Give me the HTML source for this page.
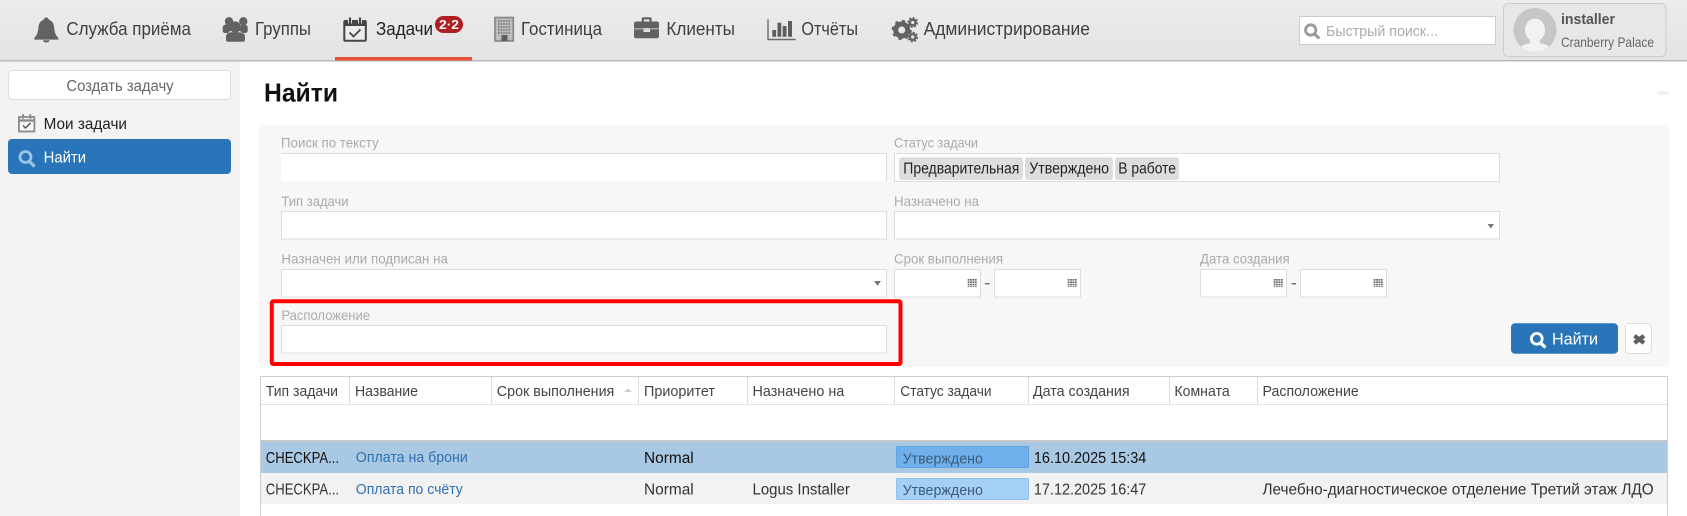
<!DOCTYPE html>
<html lang="ru"><head><meta charset="utf-8"><title>Найти</title>
<style>
html,body{margin:0;padding:0;background:#fff;width:1687px;height:516px;overflow:hidden}
svg{display:block}
text{font-family:"Liberation Sans",sans-serif;white-space:pre}
.n{font-size:18px;fill:#3f3f3f}
.l{font-size:14px;fill:#aaa}
.h{font-size:15px;fill:#444}
.c{font-size:15.5px;fill:#222}
.f{fill:#fff;stroke:#ddd;stroke-width:1}
</style></head><body>
<svg width="1687" height="516" viewBox="0 0 1687 516" xmlns="http://www.w3.org/2000/svg">
<defs>
<linearGradient id="hd" x1="0" y1="0" x2="0" y2="1"><stop offset="0" stop-color="#ececec"/><stop offset="1" stop-color="#e3e3e3"/></linearGradient>
<g id="gr" fill="none" stroke="#666" stroke-dasharray="1.6 .8"><path stroke-width="1.8" d="M0 0v8M2.4 0v8M4.8 0v8M7.2 0v8"/></g>
</defs>

<!-- header -->
<rect x="0" y="0" width="1687" height="60" fill="url(#hd)"/>
<rect x="0" y="60" width="1687" height="1.5" fill="#b9b9b9"/>
<rect x="335" y="57" width="137" height="3.5" fill="#e8503a"/>

<!-- bell -->
<g fill="#626262"><path d="M46.300 17.500c1.400 0 2.400 1 2.500 2.300 3.800 1.200 5 4 5.400 8 .5 5 1.500 7.800 4.100 10v1.800H34.300v-1.800c2.600-2.200 3.600-5 4.100-10 .4-4 1.600-6.800 5.400-8 .1-1.300 1.100-2.300 2.500-2.300z"/><path d="M43 40.300h6.600a3.300 2.200 0 0 1-6.600 0z"/></g>
<text class="n" x="66.400" y="35" textLength="124.600" lengthAdjust="spacingAndGlyphs">Служба приёма</text>

<!-- users -->
<g fill="#626262"><circle cx="229" cy="21.300" r="4.200"/><circle cx="243.300" cy="21.300" r="4.200"/><path d="M222.700 31v-3.500c0-2 1.800-3 4-3 1.500 0 2.500.3 3 .8-.2 2.700.6 4.200 1.700 5.400-1.500.5-2.700 1.100-3.500 2.300h-2.400c-1.600 0-2.800-.8-2.800-2zM247.700 31v-3.500c0-2-1.800-3-4-3-1.500 0-2.500.3-3 .8.2 2.700-.6 4.200-1.700 5.400 1.500.5 2.700 1.100 3.500 2.300h2.400c1.600 0 2.800-.8 2.800-2z"/><circle cx="235.200" cy="27" r="5.600"/><path d="M226 40v-3.500c0-2.700 2.600-4.200 5.500-4.200h7.500c2.900 0 6 1.500 6 4.200V40c0 1-.9 1.700-2 1.700h-15c-1.100 0-2-.7-2-1.700z"/></g>
<text class="n" x="255" y="35" textLength="56" lengthAdjust="spacingAndGlyphs">Группы</text>

<!-- tasks -->
<rect x="344.300" y="21" width="21.500" height="19.800" rx="1" fill="#ececec" stroke="#444" stroke-width="2"/>
<rect x="344.300" y="21" width="21.500" height="5" fill="#444"/>
<path d="M350 17.500v6M360 17.500v6" stroke="#ececec" stroke-width="4"/>
<path d="M350 17.500v6M360 17.500v6" stroke="#444" stroke-width="2.200"/>
<path d="M349.500 32.500l4 4 7-7" fill="none" stroke="#444" stroke-width="1.800"/>
<text class="n" x="376" y="35" textLength="57" lengthAdjust="spacingAndGlyphs" style="fill:#222">Задачи</text>
<rect x="435" y="16" width="28" height="17" rx="8.500" fill="#b01e24"/>
<text x="449" y="29" text-anchor="middle" font-size="13" fill="#fff" font-weight="bold" textLength="20" lengthAdjust="spacingAndGlyphs">2·2</text>

<!-- hotel -->
<rect x="495" y="17.500" width="18.300" height="23.500" fill="#bdbdbd" stroke="#858585" stroke-width="1.600"/>
<path d="M498 21h12.500M498 24h12.500M498 27h12.500M498 30h12.500M498 33h12.500" stroke="#707070" stroke-width="1.500" stroke-dasharray="1.500 1.100" fill="none"/>
<rect x="501.500" y="35" width="6" height="6" fill="#5c5c5c"/>
<text class="n" x="521" y="35" textLength="81" lengthAdjust="spacingAndGlyphs">Гостиница</text>

<!-- briefcase -->
<g fill="#626262"><path d="M641.700 22v-3c0-1 .8-1.700 1.700-1.700h6.600c.9 0 1.700.7 1.700 1.700v3h-2.200v-2.500h-5.600v2.500z"/><path d="M634 23.500c0-1.200 1-2 2-2h21c1 0 2 .8 2 2v5h-25z"/><path d="M634 29.200h9.500v2.800h6.500v-2.800h9v7c0 1.200-1 2.100-2 2.100h-21c-1 0-2-.9-2-2.100z"/><rect x="644.500" y="28" width="4.500" height="3" fill="#d6d6d6"/></g>
<text class="n" x="666.400" y="35" textLength="68.600" lengthAdjust="spacingAndGlyphs">Клиенты</text>

<!-- reports -->
<path d="M768 19.300v20.200h27.700" fill="none" stroke="#6a6a6a" stroke-width="1.400"/>
<g fill="#5e5e5e"><rect x="772.300" y="30" width="3.800" height="6.800"/><rect x="777.500" y="22.700" width="3.800" height="14.100"/><rect x="782.700" y="26" width="3.800" height="10.800"/><rect x="788" y="21" width="4" height="15.800"/></g>
<text class="n" x="801.400" y="35" textLength="56.600" lengthAdjust="spacingAndGlyphs">Отчёты</text>

<!-- gears -->
<g fill="none" stroke="#626262">
<circle cx="901.700" cy="30" r="6" stroke-width="5"/><circle cx="901.700" cy="30" r="8.800" stroke-width="2.600" stroke-dasharray="3.200 3.700"/>
<circle cx="912.700" cy="22.500" r="2.800" stroke-width="2.400"/><circle cx="912.700" cy="22.500" r="4.500" stroke-width="1.800" stroke-dasharray="2 1.500"/>
<circle cx="912.700" cy="37" r="2.800" stroke-width="2.400"/><circle cx="912.700" cy="37" r="4.500" stroke-width="1.800" stroke-dasharray="2 1.500"/>
</g>
<text class="n" x="923.600" y="35" textLength="166.400" lengthAdjust="spacingAndGlyphs">Администрирование</text>

<!-- quick search -->
<rect x="1299.500" y="16.500" width="196" height="28" fill="#fff" stroke="#ccc"/>
<circle cx="1310.700" cy="30" r="5.200" fill="none" stroke="#999" stroke-width="2.800"/><path d="M1314.500 34l4.800 4.500" stroke="#999" stroke-width="3.200"/>
<text x="1326" y="36" font-size="15" fill="#aaa" textLength="112" lengthAdjust="spacingAndGlyphs">Быстрый поиск...</text>

<!-- user -->
<rect x="1503.500" y="3.500" width="162.500" height="53" rx="5" fill="#e7e7e7" stroke="#ccc"/>
<clipPath id="av"><ellipse cx="1535" cy="30" rx="21.500" ry="22"/></clipPath>
<ellipse cx="1535" cy="30" rx="21.500" ry="22" fill="#c6c6c6"/>
<g clip-path="url(#av)" fill="#f2f2f2"><ellipse cx="1535" cy="30" rx="10" ry="11.500"/><ellipse cx="1535" cy="50" rx="16" ry="7"/><rect x="1530" y="38" width="10" height="8"/></g>
<text x="1561" y="24" font-size="15" font-weight="bold" fill="#555" textLength="54" lengthAdjust="spacingAndGlyphs">installer</text>
<text x="1561" y="47" font-size="14" fill="#666" textLength="93" lengthAdjust="spacingAndGlyphs">Cranberry Palace</text>

<!-- sidebar -->
<rect x="0" y="61.500" width="240" height="455" fill="#f3f3f3"/>
<rect x="8.500" y="70.500" width="222" height="29" rx="4" fill="#fff" stroke="#ddd"/>
<text x="66.400" y="91" font-size="15.500" fill="#666" textLength="107.200" lengthAdjust="spacingAndGlyphs">Создать задачу</text>
<g fill="none" stroke="#8a8a8a" stroke-width="1.800"><rect x="18.900" y="117" width="15.500" height="14.500" fill="#f8f8f8"/><path d="M18.900 120.500h15.500" stroke-width="2.400"/><path d="M23 114.300v4.500M30.300 114.300v4.500" stroke-width="2"/><path d="M23 125.500l2.500 2.500 5-5" stroke="#555" stroke-width="1.500"/></g>
<text x="43.600" y="129" font-size="16" fill="#222" textLength="83.400" lengthAdjust="spacingAndGlyphs">Мои задачи</text>
<rect x="8" y="139" width="223" height="35" rx="4" fill="#2a75b9"/>
<circle cx="25.500" cy="157" r="5.500" fill="none" stroke="#9cc4e6" stroke-width="2.800"/><path d="M29.500 161.500l5 5" stroke="#9cc4e6" stroke-width="3.200"/>
<text x="43.600" y="162.500" font-size="16" fill="#fff" textLength="42.400" lengthAdjust="spacingAndGlyphs">Найти</text>

<!-- title -->
<text x="264" y="101.500" font-size="26" font-weight="bold" fill="#111" textLength="74" lengthAdjust="spacingAndGlyphs">Найти</text>
<rect x="1657.500" y="91" width="11.500" height="4" rx="2" fill="#f1f1f1"/>

<!-- filter panel -->
<rect x="259" y="125" width="1410" height="242" rx="3" fill="#f7f7f7"/>

<text class="l" x="281" y="147.500" textLength="97.600" lengthAdjust="spacingAndGlyphs">Поиск по тексту</text>
<rect x="281" y="153" width="606" height="28" fill="#fff"/>
<path d="M281 153.500h605.500v27.500" fill="none" stroke="#ddd"/>

<text class="l" x="894" y="147.500" textLength="84" lengthAdjust="spacingAndGlyphs">Статус задачи</text>
<rect class="f" x="894.500" y="153.500" width="605" height="28"/>
<g fill="#ddd"><rect x="899" y="157.300" width="124" height="22.700" rx="3"/><rect x="1025" y="157.300" width="88" height="22.700" rx="3"/><rect x="1115" y="157.300" width="64" height="22.700" rx="3"/></g>
<text class="c" x="903.300" y="173.500" textLength="116" lengthAdjust="spacingAndGlyphs">Предварительная</text>
<text class="c" x="1029.300" y="173.500" textLength="79.700" lengthAdjust="spacingAndGlyphs">Утверждено</text>
<text class="c" x="1118.300" y="173.500" textLength="57.700" lengthAdjust="spacingAndGlyphs">В работе</text>

<text class="l" x="281.400" y="206" textLength="67.200" lengthAdjust="spacingAndGlyphs">Тип задачи</text>
<rect class="f" x="281.500" y="211.500" width="605" height="27.500"/>
<text class="l" x="894" y="206" textLength="85" lengthAdjust="spacingAndGlyphs">Назначено на</text>
<rect class="f" x="894.500" y="211.500" width="605" height="27.500"/>
<path d="M1487.500 224h6.500l-3.250 4.500z" fill="#777"/>

<text class="l" x="281.400" y="263.300" textLength="166.600" lengthAdjust="spacingAndGlyphs">Назначен или подписан на</text>
<rect class="f" x="281.500" y="269.500" width="605" height="27.500"/>
<path d="M874 281h7l-3.500 4.800z" fill="#777"/>

<text class="l" x="894" y="263.300" textLength="109" lengthAdjust="spacingAndGlyphs">Срок выполнения</text>
<rect class="f" x="894.500" y="269.500" width="86" height="27.500"/>
<rect class="f" x="994.500" y="269.500" width="86" height="27.500"/>
<rect x="985" y="283.300" width="4.500" height="1" fill="#333"/>
<use href="#gr" x="968.600" y="279"/><use href="#gr" x="1068.600" y="279"/>

<text class="l" x="1200" y="263.300" textLength="89.700" lengthAdjust="spacingAndGlyphs">Дата создания</text>
<rect class="f" x="1200.500" y="269.500" width="86" height="27.500"/>
<rect class="f" x="1300.500" y="269.500" width="86" height="27.500"/>
<rect x="1291.500" y="283.300" width="4.500" height="1" fill="#333"/>
<use href="#gr" x="1274.600" y="279"/><use href="#gr" x="1374.600" y="279"/>

<text class="l" x="281.400" y="320" textLength="88.600" lengthAdjust="spacingAndGlyphs">Расположение</text>
<rect class="f" x="281.500" y="325.500" width="605" height="27.500"/>

<rect x="271.800" y="301.300" width="628.700" height="62.700" rx="1.500" fill="none" stroke="#f00" stroke-width="4"/>

<rect x="1511" y="323.300" width="107" height="30.400" rx="4" fill="#2a75b9"/>
<circle cx="1536.800" cy="338.800" r="5.400" fill="none" stroke="#fff" stroke-width="2.800"/><path d="M1540.500 343l5 4.500" stroke="#fff" stroke-width="3.200"/>
<text x="1552" y="344.500" font-size="17" fill="#fff" textLength="46" lengthAdjust="spacingAndGlyphs">Найти</text>
<rect x="1625.500" y="323.500" width="26" height="30" rx="4" fill="#fff" stroke="#ddd"/>
<path d="M1634.500 335.800l9.500 7.200M1644 335.800l-9.500 7.200" stroke="#5f5f5f" stroke-width="4.200"/>

<!-- table -->
<rect x="260.500" y="376.500" width="1407" height="145" fill="#fff" stroke="#ccc"/>
<path d="M261 404.500h1406" stroke="#e2e2e2"/>
<path d="M349.500 377v27M491.500 377v27M638.500 377v27M747.500 377v27M894.500 377v27M1028.500 377v27M1169.500 377v27M1257.500 377v27" stroke="#ddd"/>
<text class="h" x="265.800" y="396" textLength="72.200" lengthAdjust="spacingAndGlyphs">Тип задачи</text>
<text class="h" x="355" y="396" textLength="63" lengthAdjust="spacingAndGlyphs">Название</text>
<text class="h" x="496.800" y="396" textLength="117.500" lengthAdjust="spacingAndGlyphs">Срок выполнения</text>
<path d="M624 392h8l-4-3.500z" fill="#ccc"/>
<text class="h" x="644" y="396" textLength="71" lengthAdjust="spacingAndGlyphs">Приоритет</text>
<text class="h" x="752.500" y="396" textLength="91.800" lengthAdjust="spacingAndGlyphs">Назначено на</text>
<text class="h" x="900.300" y="396" textLength="91.200" lengthAdjust="spacingAndGlyphs">Статус задачи</text>
<text class="h" x="1033" y="396" textLength="96.600" lengthAdjust="spacingAndGlyphs">Дата создания</text>
<text class="h" x="1174.400" y="396" textLength="55.300" lengthAdjust="spacingAndGlyphs">Комната</text>
<text class="h" x="1262.500" y="396" textLength="96.300" lengthAdjust="spacingAndGlyphs">Расположение</text>

<rect x="261" y="440" width="1406" height="2" fill="#c8c8c8"/>
<rect x="261" y="442" width="1406" height="31" fill="#a9c8e4"/>
<rect x="261" y="473" width="1406" height="31" fill="#f2f2f2"/>

<text class="c" x="265.800" y="463" textLength="73.200" lengthAdjust="spacingAndGlyphs" style="fill:#111">CHECKPA...</text>
<text x="355.800" y="462" font-size="15" fill="#3270b2" textLength="112" lengthAdjust="spacingAndGlyphs">Оплата на брони</text>
<text class="c" x="644" y="463" textLength="49.700" lengthAdjust="spacingAndGlyphs" style="fill:#111">Normal</text>
<rect x="896.500" y="446.500" width="132" height="21" rx="1" fill="#6fb0ec" stroke="#5fa3e2"/>
<text x="902.600" y="463.500" font-size="15" fill="#3d5a78" textLength="80.300" lengthAdjust="spacingAndGlyphs">Утверждено</text>
<text class="c" x="1033.900" y="463" textLength="112.400" lengthAdjust="spacingAndGlyphs" style="fill:#111">16.10.2025 15:34</text>

<text class="c" x="265.800" y="494.500" textLength="73.200" lengthAdjust="spacingAndGlyphs" style="fill:#333">CHECKPA...</text>
<text x="355.800" y="494" font-size="15" fill="#3270b2" textLength="107" lengthAdjust="spacingAndGlyphs">Оплата по счёту</text>
<text class="c" x="644" y="494.500" textLength="49.700" lengthAdjust="spacingAndGlyphs" style="fill:#333">Normal</text>
<text class="c" x="752.500" y="494.500" textLength="97.300" lengthAdjust="spacingAndGlyphs" style="fill:#333">Logus Installer</text>
<rect x="896.500" y="478.500" width="132" height="21" rx="1" fill="#a4d0f8" stroke="#8fc0ee"/>
<text x="902.600" y="495" font-size="15" fill="#3d5a78" textLength="80.300" lengthAdjust="spacingAndGlyphs">Утверждено</text>
<text class="c" x="1033.900" y="494.500" textLength="112.400" lengthAdjust="spacingAndGlyphs" style="fill:#333">17.12.2025 16:47</text>
<text class="c" x="1262.500" y="494.500" textLength="391.200" lengthAdjust="spacingAndGlyphs" style="fill:#333">Лечебно-диагностическое отделение Третий этаж ЛДО</text>
</svg>
</body></html>
